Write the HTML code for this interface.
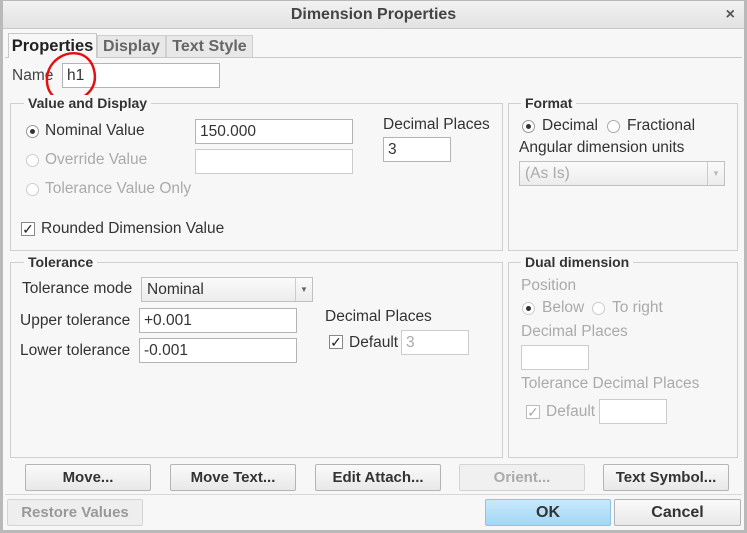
<!DOCTYPE html>
<html><head><style>
*{box-sizing:border-box;margin:0;padding:0}
body{width:747px;height:533px;background:#f0f0f0;font-family:"Liberation Sans",sans-serif;font-size:15.5px;color:#333;position:relative;overflow:hidden}
.a{position:absolute;white-space:nowrap}
.frame{left:0;top:0;width:747px;height:533px;border:3px solid #b9b9b9;border-top:1px solid #b9b9b9;background:#f7f7f7}
.title{left:3px;top:1px;width:741px;height:28px;background:linear-gradient(#f2f2f2,#e2e2e2);border-bottom:1px solid #c8c8c8;text-align:center;font-weight:bold;font-size:16px;line-height:28px;color:#444}
.inp{background:#fff;border:1px solid #b4b4b4;height:25px;padding-left:4px;line-height:23px;color:#333}
.grp{border:1px solid #cfcfcf}
.lg{font-weight:bold;font-size:14px;background:#f7f7f7;padding:0 4px;color:#333}
.rad{width:13px;height:13px;border:1px solid #999;border-radius:50%;background:#fff}
.rad.on::after{content:"";position:absolute;left:3px;top:3px;width:5px;height:5px;border-radius:50%;background:#333}
.rad.dis{border-color:#ccc}
.dis{color:#aaa}
.chk{width:14px;height:14px;border:1px solid #888;background:#fff;font-size:14px;line-height:12px;text-align:center;color:#222}
.btn{height:27px;border:1px solid #b4b4b4;border-radius:2px;background:linear-gradient(#fafafa,#e8e8e8);text-align:center;font-weight:bold;font-size:15px;line-height:25px;color:#333}
.sel{background:linear-gradient(#fafafa,#ececec);border:1px solid #c0c0c0;height:25px;line-height:23px;padding-left:5px}
.arr{position:absolute;right:0;top:0;width:17px;height:23px;border-left:1px solid #ccc;font-size:8px;text-align:center;line-height:23px;color:#666}
</style></head><body>
<div class="a frame"></div>
<div class="a title">Dimension Properties</div>
<div class="a" style="right:12px;top:6px;font-size:16px;font-weight:bold;color:#555">×</div>

<div class="a" style="left:5px;top:57px;width:737px;height:1px;background:#c8c8c8"></div>
<div class="a" style="left:8px;top:33px;width:89px;height:25px;background:#f7f7f7;border:1px solid #c8c8c8;border-bottom:none;font-weight:bold;font-size:16.5px;line-height:24px;text-align:center;color:#222">Properties</div>
<div class="a" style="left:97px;top:35px;width:69px;height:22px;background:#e8e8e8;border:1px solid #cfcfcf;border-bottom:none;font-weight:bold;font-size:16px;line-height:22px;text-align:center;color:#666">Display</div>
<div class="a" style="left:166px;top:35px;width:87px;height:22px;background:#e8e8e8;border:1px solid #cfcfcf;border-bottom:none;font-weight:bold;font-size:16px;line-height:22px;text-align:center;color:#666">Text Style</div>

<div class="a" style="left:12px;top:67px;color:#444">Name</div>
<div class="a inp" style="left:62px;top:63px;width:158px">h1</div>
<svg class="a" style="left:42px;top:50px" width="62" height="56"><path d="M38 4 C22 0 6 12 5 28 C4 44 16 54 30 51 C46 48 56 36 52 20 C50 11 44 6 38 4" fill="none" stroke="#e31010" stroke-width="2.5"/></svg>

<div class="a grp" style="left:10px;top:103px;width:493px;height:148px"></div>
<div class="a lg" style="left:24px;top:95px">Value and Display</div>
<div class="a rad on" style="left:26px;top:125px"></div><div class="a" style="left:45px;top:122px">Nominal Value</div>
<div class="a inp" style="left:195px;top:119px;width:158px">150.000</div>
<div class="a rad dis" style="left:26px;top:154px"></div><div class="a dis" style="left:45px;top:151px">Override Value</div>
<div class="a inp" style="left:195px;top:149px;width:158px;border-color:#ccc"></div>
<div class="a rad dis" style="left:26px;top:183px"></div><div class="a dis" style="left:45px;top:180px">Tolerance Value Only</div>
<div class="a" style="left:383px;top:116px">Decimal Places</div>
<div class="a inp" style="left:383px;top:137px;width:68px">3</div>
<div class="a chk" style="left:21px;top:222px">✓</div><div class="a" style="left:41px;top:220px">Rounded Dimension Value</div>

<div class="a grp" style="left:508px;top:103px;width:230px;height:148px"></div>
<div class="a lg" style="left:521px;top:95px">Format</div>
<div class="a rad on" style="left:522px;top:120px"></div><div class="a" style="left:542px;top:117px">Decimal</div>
<div class="a rad" style="left:607px;top:120px;border-color:#aaa"></div><div class="a" style="left:627px;top:117px">Fractional</div>
<div class="a" style="left:519px;top:139px">Angular dimension units</div>
<div class="a sel dis" style="left:519px;top:161px;width:206px">(As Is)<div class="arr" style="color:#bbb">▼</div></div>

<div class="a grp" style="left:10px;top:262px;width:493px;height:196px"></div>
<div class="a lg" style="left:24px;top:254px">Tolerance</div>
<div class="a" style="left:22px;top:280px">Tolerance mode</div>
<div class="a sel" style="left:141px;top:277px;width:172px;color:#333">Nominal<div class="arr">▼</div></div>
<div class="a" style="left:20px;top:312px">Upper tolerance</div>
<div class="a inp" style="left:139px;top:308px;width:158px">+0.001</div>
<div class="a" style="left:20px;top:342px">Lower tolerance</div>
<div class="a inp" style="left:139px;top:338px;width:158px">-0.001</div>
<div class="a" style="left:325px;top:308px">Decimal Places</div>
<div class="a chk" style="left:329px;top:335px">✓</div><div class="a" style="left:349px;top:334px">Default</div>
<div class="a inp dis" style="left:401px;top:330px;width:68px;border-color:#ccc">3</div>

<div class="a grp" style="left:508px;top:262px;width:230px;height:196px"></div>
<div class="a lg" style="left:521px;top:254px">Dual dimension</div>
<div class="a dis" style="left:521px;top:277px">Position</div>
<div class="a rad dis on" style="left:522px;top:302px"></div><div class="a dis" style="left:542px;top:299px">Below</div>
<div class="a rad dis" style="left:592px;top:302px"></div><div class="a dis" style="left:612px;top:299px">To right</div>
<div class="a dis" style="left:521px;top:323px">Decimal Places</div>
<div class="a inp" style="left:521px;top:345px;width:68px;border-color:#ccc"></div>
<div class="a dis" style="left:521px;top:375px">Tolerance Decimal Places</div>
<div class="a chk dis" style="left:526px;top:405px;border-color:#bbb;color:#aaa">✓</div><div class="a dis" style="left:546px;top:403px">Default</div>
<div class="a inp" style="left:599px;top:399px;width:68px;border-color:#ccc"></div>

<div class="a btn" style="left:25px;top:464px;width:126px">Move...</div>
<div class="a btn" style="left:170px;top:464px;width:126px">Move Text...</div>
<div class="a btn" style="left:315px;top:464px;width:126px">Edit Attach...</div>
<div class="a btn" style="left:459px;top:464px;width:126px;color:#aaa;border-color:#d4d4d4;background:#f0f0f0">Orient...</div>
<div class="a btn" style="left:603px;top:464px;width:126px">Text Symbol...</div>
<div class="a" style="left:5px;top:494px;width:737px;height:1px;background:#d8d8d8"></div>
<div class="a btn" style="left:7px;top:499px;width:136px;color:#999;border-color:#d4d4d4;background:#eeeeee">Restore Values</div>
<div class="a btn" style="left:485px;top:499px;width:126px;background:linear-gradient(#c9e9fb,#a2d7f5);border-color:#8cc4e6;font-size:16px">OK</div>
<div class="a btn" style="left:614px;top:499px;width:127px;font-size:16px">Cancel</div>
</body></html>
